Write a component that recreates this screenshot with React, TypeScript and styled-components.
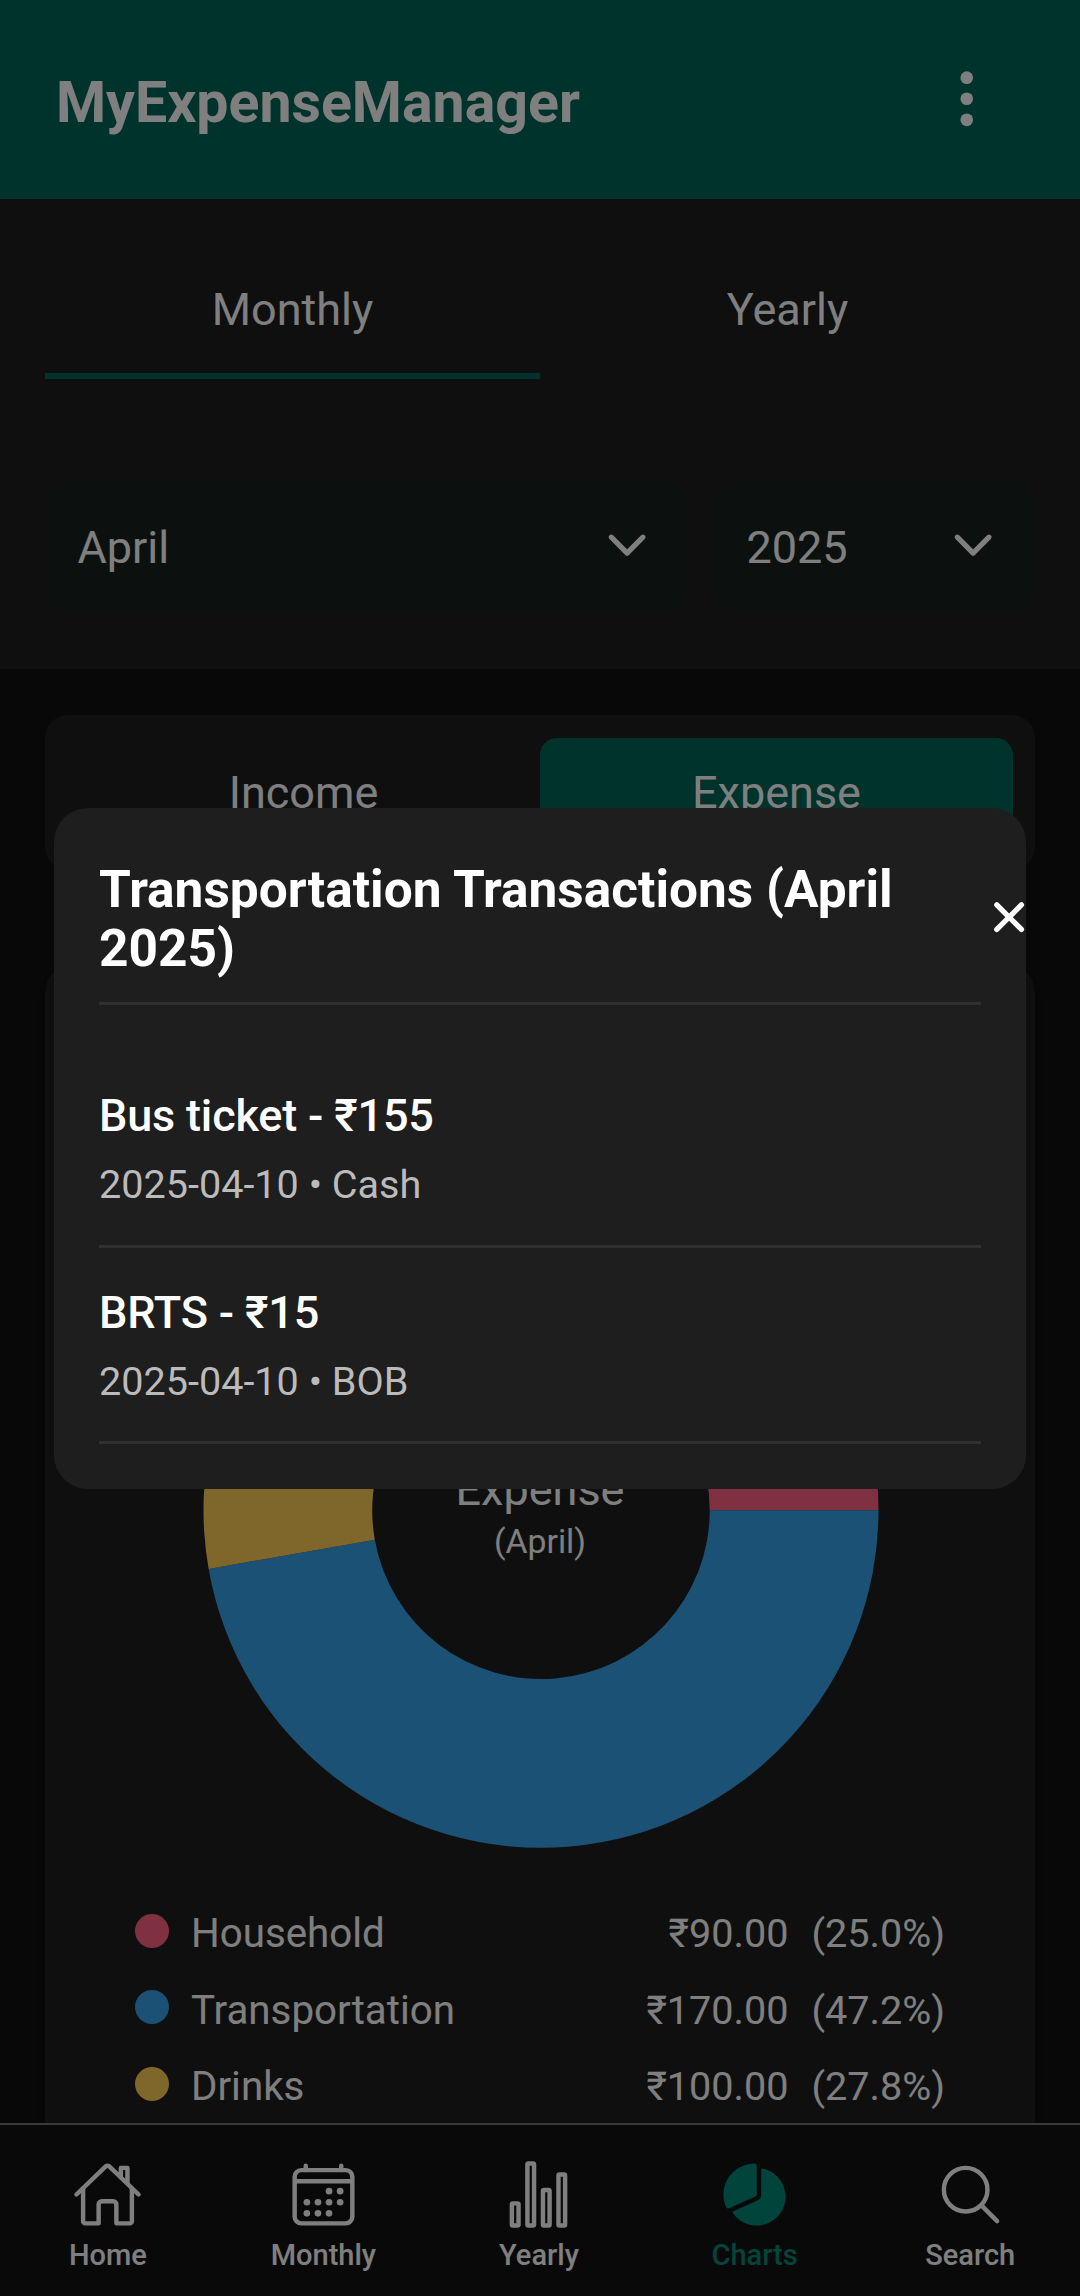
import React from "react";
import styled, { createGlobalStyle } from "styled-components";
import {
  IoHomeOutline,
  IoCalendarOutline,
  IoStatsChartOutline,
  IoPieChart,
  IoSearchOutline,
  IoChevronDown,
  IoClose,
  IoEllipsisVertical,
} from "react-icons/io5";

const colors = {
  page: "#111111",
  surface: "#1e1e1e",
  field: "#19221f",
  primary: "#006656",
  active: "#008876",
  text: "#ffffff",
};

const GlobalStyle = createGlobalStyle`
  * { box-sizing: border-box; }
  body { margin: 0; background: #080808; }
  button { font: inherit; color: inherit; background: none; border: 0; padding: 0; }
`;

const Screen = styled.div`
  position: relative;
  display: flex;
  flex-direction: column;
  width: 1080px;
  height: 2296px;
  overflow: hidden;
  background: ${colors.page};
  color: ${colors.text};
  font-family: Roboto, "Noto Sans", sans-serif;
  font-size: 45px;
  line-height: 53px;
`;

const Header = styled.header`
  flex: none;
  display: flex;
  align-items: center;
  justify-content: space-between;
  height: 199px;
  padding: 7px 80px 0 56px;
  background: ${colors.primary};
`;

const AppTitle = styled.h1`
  margin: 0;
  font-size: 57.25px;
  line-height: 66px;
  font-weight: 700;
`;

const MenuButton = styled.button`
  display: flex;
  margin-top: -8px;
  font-size: 67.5px;
`;

const Filters = styled.section`
  flex: none;
  height: 470px;
  padding: 0 45px;
  background: ${colors.surface};
`;

const Tabs = styled.div`
  display: flex;
  height: 180px;
`;

const Tab = styled.button<{ $active?: boolean }>`
  flex: 1;
  padding-top: 47px;
  border-bottom: 6px solid ${(p) => (p.$active ? colors.primary : "transparent")};
`;

const Selects = styled.div`
  display: grid;
  grid-template-columns: 644fr 321fr;
  gap: 25px;
  margin-top: 103px;
`;

const Select = styled.button`
  display: flex;
  align-items: center;
  justify-content: space-between;
  height: 129px;
  padding: 1px 34px 0 32.5px;
  border-radius: 23px;
  background: ${colors.field};
  svg { font-size: 56.25px; margin-top: -3px; }
`;

const Content = styled.main`
  flex: 1;
  min-height: 0;
  overflow: hidden;
  display: flex;
  flex-direction: column;
  gap: 90px;
  padding: 46px 45px 0;
`;

const Toggle = styled.div`
  flex: none;
  display: flex;
  height: 155px;
  padding: 23px 22px;
  border-radius: 23px;
  background: ${colors.surface};
`;

const ToggleOption = styled.button<{ $active?: boolean }>`
  flex: 1;
  border-radius: 17px;
  background: ${(p) => (p.$active ? colors.primary : "transparent")};
`;

const ChartCard = styled.section`
  flex: none;
  display: flex;
  flex-direction: column;
  align-items: center;
  height: 1300px;
  padding: 212px 90px 0;
  border-radius: 34px;
  background: ${colors.surface};
  box-shadow: 0 6px 17px rgba(0, 0, 0, 0.3);
`;

const Donut = styled.div`
  display: grid;
  width: 676px;
  height: 676px;
  > * { grid-area: 1 / 1; }
  svg { overflow: visible; }
`;

const DonutLabel = styled.div`
  align-self: center;
  text-align: center;
  padding-top: 5px;
`;

const DonutPeriod = styled.div`
  font-size: 33.75px;
  line-height: 40px;
  margin-top: 6px;
`;

const Legend = styled.div`
  align-self: stretch;
  margin-top: 48px;
`;

const LegendRow = styled.div`
  display: flex;
  align-items: center;
  height: 76.5px;
  font-size: 39.6px;
  line-height: 46px;
`;

const LegendName = styled.span`
  font-size: 40.3px;
`;

const Dot = styled.span<{ $color: string }>`
  width: 34px;
  height: 34px;
  margin: -7px 22px 0 0;
  border-radius: 50%;
  background: ${(p) => p.$color};
`;

const Amount = styled.span`
  margin-left: auto;
`;

const Percent = styled.span`
  margin-left: 23px;
`;

const BottomNav = styled.nav`
  flex: none;
  display: flex;
  height: 173px;
  padding-right: 2px;
  border-top: 2px solid #737373;
  background: #121212;
`;

const NavItem = styled.button<{ $active?: boolean }>`
  flex: 1;
  display: flex;
  flex-direction: column;
  align-items: center;
  padding-top: 34px;
  font-size: 29px;
  line-height: 34px;
  font-weight: 500;
  color: ${(p) => (p.$active ? colors.active : colors.text)};
  svg { font-size: 71px; margin-bottom: 8px; }
`;

const Overlay = styled.div`
  position: absolute;
  inset: 0;
  display: flex;
  align-items: center;
  justify-content: center;
  padding-top: 1px;
  background: rgba(0, 0, 0, 0.5);
`;

const Dialog = styled.div`
  width: 972px;
  height: 681px;
  padding: 45px;
  border-radius: 34px;
  background: #1e1e1e;
`;

const DialogHeader = styled.div`
  display: flex;
  align-items: center;
  height: 152px;
  padding-bottom: 18px;
  border-bottom: 3px solid #303030;
  margin-bottom: 46px;
`;

const DialogTitle = styled.h2`
  flex: none;
  width: 882px;
  margin: 0;
  font-size: 51.4px;
  line-height: 59px;
  font-weight: 700;
`;

const CloseButton = styled.button`
  flex: none;
  display: flex;
  margin-top: -3px;
  font-size: 56.25px;
`;

const Transaction = styled.div`
  height: 196.5px;
  padding-top: 38px;
  border-bottom: 3px solid #303030;
`;

const TransactionName = styled.div`
  font-weight: 500;
  letter-spacing: -0.18px;
`;

const TransactionMeta = styled.div`
  margin-top: 20px;
  font-size: 39.6px;
  line-height: 46px;
  color: #bbbbbb;
`;

const slices = [
  { name: "Household", color: "#ff6384", amount: 90, share: 0.25, percent: "25.0%" },
  { name: "Transportation", color: "#36a2eb", amount: 170, share: 0.4722, percent: "47.2%" },
  { name: "Drinks", color: "#ffce56", amount: 100, share: 0.2778, percent: "27.8%" },
];

const transactions = [
  { name: "Bus ticket", amount: 155, date: "2025-04-10", account: "Cash" },
  { name: "BRTS", amount: 15, date: "2025-04-10", account: "BOB" },
];

const navItems = [
  { label: "Home", Icon: IoHomeOutline },
  { label: "Monthly", Icon: IoCalendarOutline },
  { label: "Yearly", Icon: IoStatsChartOutline },
  { label: "Charts", Icon: IoPieChart, active: true },
  { label: "Search", Icon: IoSearchOutline },
];

function slicePath(from: number, to: number) {
  const outer = 337.5;
  const inner = 168.75;
  const point = (turn: number, r: number) => {
    const a = turn * 2 * Math.PI - Math.PI / 2;
    return `${339 + r * Math.cos(a)} ${338.3 + r * Math.sin(a)}`;
  };
  const large = to - from > 0.5 ? 1 : 0;
  return `M${point(from, outer)}A${outer} ${outer} 0 ${large} 1 ${point(to, outer)}L${point(to, inner)}A${inner} ${inner} 0 ${large} 0 ${point(from, inner)}Z`;
}

function DonutChart() {
  let start = 0;
  return (
    <svg width="676" height="676" viewBox="0 0 676 676">
      {slices.map((s) => {
        const d = slicePath(start, start + s.share);
        start += s.share;
        return <path key={s.name} d={d} fill={s.color} />;
      })}
    </svg>
  );
}

export default function App() {
  return (
    <Screen>
      <GlobalStyle />
      <Header>
        <AppTitle>MyExpenseManager</AppTitle>
        <MenuButton aria-label="Menu"><IoEllipsisVertical /></MenuButton>
      </Header>
      <Filters>
        <Tabs>
          <Tab $active>Monthly</Tab>
          <Tab>Yearly</Tab>
        </Tabs>
        <Selects>
          <Select>April<IoChevronDown /></Select>
          <Select>2025<IoChevronDown /></Select>
        </Selects>
      </Filters>
      <Content>
        <Toggle>
          <ToggleOption>Income</ToggleOption>
          <ToggleOption $active>Expense</ToggleOption>
        </Toggle>
        <ChartCard>
          <Donut>
            <DonutChart />
            <DonutLabel>
              Expense
              <DonutPeriod>(April)</DonutPeriod>
            </DonutLabel>
          </Donut>
          <Legend>
            {slices.map((s) => (
              <LegendRow key={s.name}>
                <Dot $color={s.color} />
                <LegendName>{s.name}</LegendName>
                <Amount>₹{s.amount.toFixed(2)}</Amount>
                <Percent>({s.percent})</Percent>
              </LegendRow>
            ))}
          </Legend>
        </ChartCard>
      </Content>
      <BottomNav>
        {navItems.map(({ label, Icon, active }) => (
          <NavItem key={label} $active={active}>
            <Icon />
            {label}
          </NavItem>
        ))}
      </BottomNav>
      <Overlay>
        <Dialog role="dialog">
          <DialogHeader>
            <DialogTitle>Transportation Transactions (April 2025)</DialogTitle>
            <CloseButton aria-label="Close"><IoClose /></CloseButton>
          </DialogHeader>
          {transactions.map((t) => (
            <Transaction key={t.name}>
              <TransactionName>{t.name} - ₹{t.amount}</TransactionName>
              <TransactionMeta>{t.date} • {t.account}</TransactionMeta>
            </Transaction>
          ))}
        </Dialog>
      </Overlay>
    </Screen>
  );
}
